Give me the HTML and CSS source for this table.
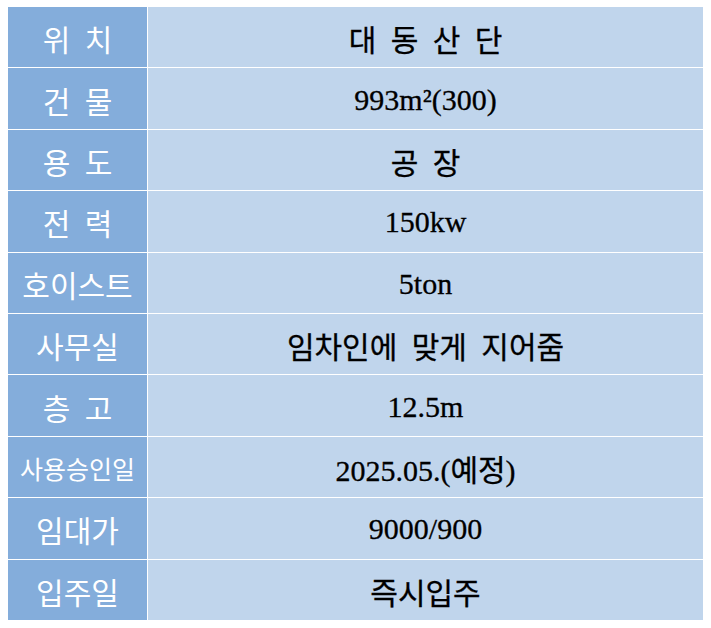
FILE: index.html
```html
<!DOCTYPE html>
<html lang="ko">
<head>
<meta charset="utf-8">
<link rel="stylesheet" href="styles.css">
</head>
<body>
<div class="sheet">
  <div class="label">위 치</div><div class="value ko">대 동 산 단</div>
  <div class="label">건 물</div><div class="value">993m²(300)</div>
  <div class="label">용 도</div><div class="value ko">공 장</div>
  <div class="label">전 력</div><div class="value">150kw</div>
  <div class="label">호이스트</div><div class="value">5ton</div>
  <div class="label">사무실</div><div class="value ko">임차인에 맞게 지어줌</div>
  <div class="label">층 고</div><div class="value">12.5m</div>
  <div class="label small">사용승인일</div><div class="value">2025.05.(예정)</div>
  <div class="label">임대가</div><div class="value">9000/900</div>
  <div class="label">입주일</div><div class="value ko">즉시입주</div>
</div>
</body>
</html>
```
FILE: styles.css
```css
html, body {
  margin: 0;
  background: #ffffff;
}
body {
  padding: 7px 8px 0 8px;
}
.sheet {
  display: grid;
  grid-template-columns: 139px 1fr;
  grid-auto-rows: 60.4px;
  gap: 1px;
  background: #ffffff;
}
.label {
  background: #84addb;
  color: #ffffff;
  font-family: "Noto Sans CJK KR", sans-serif;
  font-size: 30px;
  word-spacing: 6px;
  display: flex;
  align-items: center;
  justify-content: center;
  padding-top: 2px;
}
.label.small {
  font-size: 25px;
  word-spacing: 0;
}
.value {
  background: #c0d5ec;
  color: #000000;
  font-family: "Liberation Serif", "Noto Sans CJK KR", serif;
  font-size: 30px;
  -webkit-text-stroke: 0.3px #000000;
  display: flex;
  align-items: center;
  justify-content: center;
  padding-top: 2px;
}
.value.ko {
  font-family: "Noto Sans CJK KR", sans-serif;
  font-weight: 400;
  word-spacing: 6px;
}
```
